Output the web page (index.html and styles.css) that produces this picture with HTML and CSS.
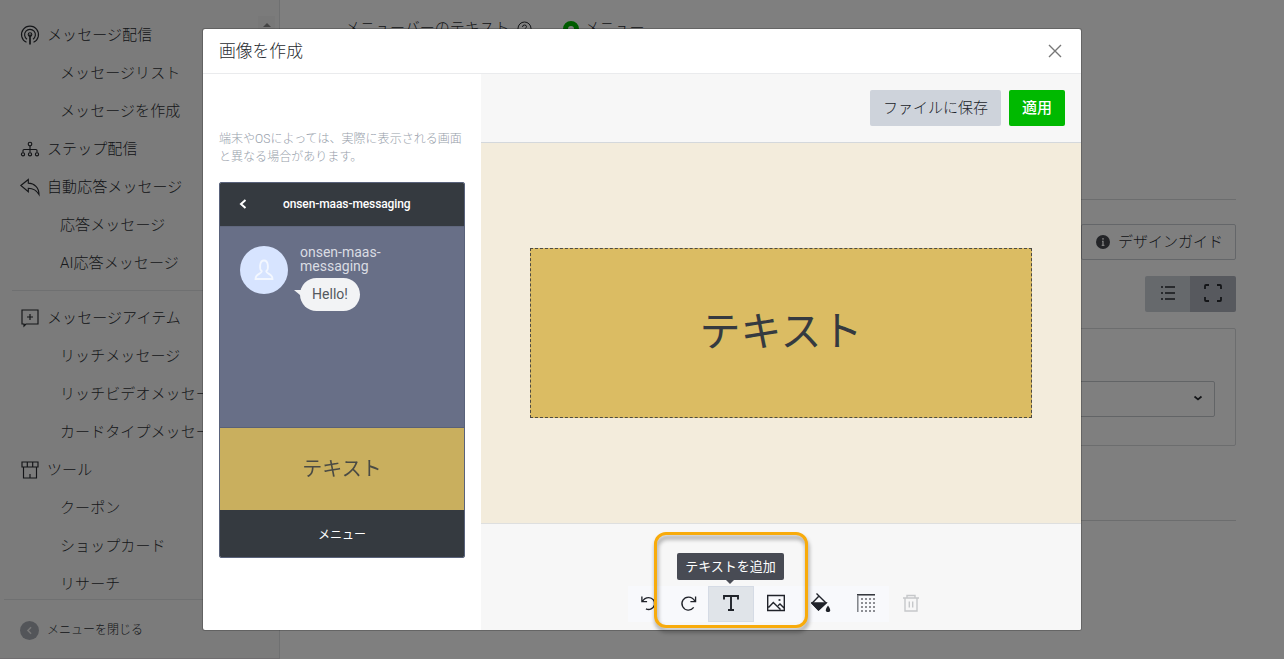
FILE: index.html
```html
<!DOCTYPE html>
<html lang="ja">
<head>
<meta charset="utf-8">
<title>画像を作成</title>
<link rel="stylesheet" href="styles.css">
</head>
<body>
<div class="app">
  <aside class="sidebar">
    <nav class="nav">
      <div class="nav-head"><svg class="ico" viewBox="0 0 20 20"><path d="M6.500 17.300a8.500 8.500 0 1 1 7 0"/><path d="M7 14.200a5.400 5.400 0 1 1 6 0"/><circle cx="10" cy="9.500" r="1.800"/><path d="M10 9.500v10" stroke-width="1.700"/></svg>メッセージ配信</div>
      <div class="nav-item">メッセージリスト</div>
      <div class="nav-item">メッセージを作成</div>
      <div class="nav-head"><svg class="ico" viewBox="0 0 20 20"><circle cx="10" cy="5" r="1.800"/><circle cx="3" cy="15.300" r="1.600"/><circle cx="10" cy="15.300" r="1.600"/><circle cx="17" cy="15.300" r="1.600"/><path d="M10 7v6.600M3 13.600V11.500q0-1 1-1h12q1 0 1 1v2.100"/></svg>ステップ配信</div>
      <div class="nav-head"><svg class="ico" viewBox="0 0 20 20"><path d="M.8 8.500 8.300 2.500v3.600C14.500 6.400 19 10.500 19 17.500 16.500 13 13 11.200 8.300 11.200v3.600Z"/></svg>自動応答メッセージ</div>
      <div class="nav-item">応答メッセージ</div>
      <div class="nav-item">AI応答メッセージ</div>
      <div class="nav-line"></div>
      <div class="nav-head"><svg class="ico" viewBox="0 0 20 20"><path d="M2 2h16v14H6l-2 2v-2H2ZM10 6v6M7 9h6"/></svg>メッセージアイテム</div>
      <div class="nav-item">リッチメッセージ</div>
      <div class="nav-item">リッチビデオメッセージ</div>
      <div class="nav-item">カードタイプメッセージ</div>
      <div class="nav-head"><svg class="ico" viewBox="0 0 20 20"><path d="M2 2h16v5H2ZM7.300 2v5M12.700 2v5M3.500 7v11h13V7M10 18v-4"/></svg>ツール</div>
      <div class="nav-item">クーポン</div>
      <div class="nav-item">ショップカード</div>
      <div class="nav-item">リサーチ</div>
    </nav>
    <div class="scroll-button"></div>
    <div class="collapse"><span class="collapse-dot"><svg viewBox="0 0 18 18"><path d="m10.500 6-3 3 3 3"/></svg></span>メニューを閉じる</div>
  </aside>
  <main class="main">
    <div class="bar-field"><span class="label">メニューバーのテキスト</span><svg class="help" viewBox="0 0 15 15"><circle cx="7.500" cy="7.500" r="6.500"/><path d="M5.500 6q0-2 2-2t2 1.700q0 1-1 1.500t-1 1.600M7.500 10v1.200"/></svg><span class="radio"></span><span class="label">メニュー</span></div>
    <div class="guide-row"><div class="guide"><svg viewBox="0 0 14 14"><circle cx="7" cy="7" r="7" fill="#46494f"/><path d="M7 3v1.800M6 6.300h1V10M5.700 10.300h2.700" stroke="#fff" stroke-width="1.300" fill="none"/></svg>デザインガイド</div></div>
    <div class="views"><span class="view"><svg viewBox="0 0 18 18"><path d="M2 3h2M6 3h10M2 9h2M6 9h10M2 15h2M6 15h10"/></svg></span><span class="view view-on"><svg viewBox="0 0 18 18"><path d="M1 5V2q0-1 1-1h3M13 1h3q1 0 1 1v3M1 13v3q0 1 1 1h3M13 17h3q1 0 1-1v-3" stroke-width="1.800"/></svg></span></div>
    <div class="panel"><div class="select"><svg viewBox="0 0 10 10"><path d="m1.500 3.500 3.500 3 3.500-3"/></svg></div></div>
    <div class="end-line"></div>
  </main>
</div>
<div class="backdrop">
  <section class="modal">
    <header class="modal-head"><span>画像を作成</span><svg class="close" viewBox="0 0 14 14"><path d="m1 1 12 12M13 1 1 13"/></svg></header>
    <div class="modal-body">
      <div class="preview">
        <p class="note">端末やOSによっては、実際に表示される画面<br>と異なる場合があります。</p>
        <div class="phone">
          <div class="phone-head"><svg viewBox="0 0 8 10"><path d="M6.500 1 2 5l4.500 4"/></svg><span>onsen-maas-messaging</span></div>
          <div class="chat">
            <div class="avatar"><svg viewBox="0 0 20 22"><path d="M7.800 12.300C5 10 5.500 1.500 10 1.500s5 8.500 2.200 10.800c0 2.700 6.300 2.200 6.300 7.700h-17c0-5.500 6.300-5 6.300-7.700Z"/></svg></div>
            <div class="talk"><div class="name">onsen-maas-<br>messaging</div><div class="bubble">Hello!</div></div>
          </div>
          <div class="thumb"><span>テキスト</span></div>
          <div class="phone-menu">メニュー</div>
        </div>
      </div>
      <div class="editor">
        <div class="actions"><button class="btn btn-save">ファイルに保存</button><button class="btn btn-apply">適用</button></div>
        <div class="canvas"><div class="artboard">テキスト</div></div>
        <div class="tools">
          <div class="tool-group">
            <span class="tool tool-undo"><svg viewBox="0 0 18 18"><path d="M2 1.500V7h5.500M2.500 7C4 4 6.500 2.700 9.300 2.700a6.300 6.300 0 1 1-3 11.900"/></svg></span>
            <span class="tool tool-redo"><svg viewBox="0 0 18 18"><path d="M16.500 1.500V7H11M16 7C14.500 4 12 2.200 9 2.200a6.900 6.900 0 1 0 5.500 11"/></svg></span>
            <span class="tool tool-on"><svg viewBox="0 0 18 18"><path d="M2 5.500V2h14v3.500M9 2v14M6 16h6" stroke-width="1.900"/></svg><span class="tip">テキストを追加</span></span>
            <span class="tool"><svg viewBox="0 0 18 18"><path d="M.7 1.500h16.600v15H.7ZM1.500 13.500l4.800-5 7.200 7M11 11.800l2-1.800 4 4"/><circle cx="12.500" cy="6" r=".4"/></svg></span>
            <span class="tool"><svg class="bucket" viewBox="0 0 20 20"><path d="m5.500.5 9.500 9.500-7.500 6.800L1 10.300l6.500-6.800"/><path d="M1 10h14l-7.500 7Z" fill="#20232a"/><path d="M17 12.500c-4 5.500-1.500 6.500 0 6.500s4-1 0-6.500Z" fill="#20232a" stroke="none"/></svg></span>
            <span class="tool"><svg viewBox="0 0 18 18"><path d="M0 .8h18"/><path d="M.8 1v17" stroke="#777b80"/><path d="M4 5h14M4 9h14M4 13h14M4 17h14" stroke-dasharray="2 2" stroke-width="1"/></svg></span>
          </div>
          <span class="tool tool-off"><svg viewBox="0 0 18 18"><path d="M1 4h16M5 4V1.500h8V4M3 4.500V17h12V4.500M7.300 7.500v6M10.700 7.500v6"/></svg></span>
        </div>
      </div>
    </div>
  </section>
  <div class="highlight"></div>
</div>
</body>
</html>
```
FILE: styles.css
```css
* { box-sizing: border-box; }
body { margin: 0; width: 1284px; height: 659px; overflow: hidden; position: relative; font: 300 15px/20px Roboto, "Noto Sans CJK JP", sans-serif; color: #282b30; background: #fff; }
svg { fill: none; stroke: currentColor; stroke-width: 1.4; display: block; flex: none; }

.app { display: flex; height: 659px; }
.sidebar { width: 280px; flex: none; background: #f7f7f7; border-right: 1px solid #dfe1e3; border-bottom: 1px solid #e0dde0; position: relative; display: flex; flex-direction: column; }
.nav { height: 599px; padding-top: 16px; overflow: hidden; }
.nav-head, .nav-item { height: 38px; display: flex; align-items: center; white-space: nowrap; letter-spacing: .08px; }
.nav-head { padding-left: 20px; gap: 7px; }
.nav-item { padding-left: 60px; color: #303338; }
.ico { width: 20px; height: 20px; margin-top: -1px; stroke-width: 1.150; }
.nav-line { height: 1px; margin: 8px 28px 8px 12px; background: #dfe1e3; }
.scroll-button { position: absolute; left: 258px; top: 16px; width: 17px; height: 17px; background: #f0f0f0; display: flex; justify-content: center; }
.scroll-button::before { content: ""; margin-top: 7px; height: 0; border: 4px solid transparent; border-top: 0; border-bottom-color: #888; }
.collapse { flex: 1; margin-left: 4px; padding: 2px 0 0 16px; border-top: 1px solid #dfe1e3; display: flex; align-items: center; gap: 8px; font-size: 12px; }
.collapse-dot { width: 19px; height: 19px; border-radius: 50%; background: #a7abb3; color: #eee; }

.main { flex: 1; padding: 18px 48px 0 65px; }
.bar-field { height: 182px; border-bottom: 1px solid #d8dadd; display: flex; align-items: flex-start; }
.help { width: 15px; height: 15px; margin: 3px 31px 0 8px; stroke-width: 1; }
.radio { width: 16px; height: 16px; margin: 3px 5px 0 0; border: 5px solid #00b900; border-radius: 50%; }
.guide-row { display: flex; justify-content: flex-end; padding-top: 24px; }
.guide { width: 155px; height: 36px; padding-left: 2px; border: 1px solid #c9cdd2; border-radius: 2px; display: flex; align-items: center; justify-content: center; gap: 8px; white-space: nowrap; }
.guide svg { width: 14px; height: 14px; stroke: none; }
.views { display: flex; justify-content: flex-end; margin-top: 16px; }
.view { width: 45px; height: 36px; background: #cdd2d8; border-radius: 2px 0 0 2px; display: grid; place-items: center; }
.view svg { width: 18px; height: 18px; margin-top: -3px; }
.view-on { width: 46px; background: #aeb3bd; border-radius: 0 2px 2px 0; }
.panel { height: 118px; margin-top: 16px; padding: 52px 20px 0; border: 1px solid #d8dadd; border-radius: 2px; }
.select { height: 36px; border: 1px solid #c4c8cd; border-radius: 2px; display: flex; align-items: center; justify-content: flex-end; padding-right: 11px; }
.select svg { width: 10px; height: 10px; margin-top: -2px; stroke-width: 1.700; }
.end-line { height: 1px; margin-top: 74px; background: #d8dadd; }

.backdrop { position: absolute; inset: 0; background: rgba(0, 0, 0, .5); }
.modal { position: absolute; left: 202px; top: 28px; width: 880px; height: 603px; background: #fff; background-clip: padding-box; border: 1px solid rgba(0, 0, 0, .2); border-radius: 3px; overflow: hidden; }
.modal-head { height: 45px; padding: 0 19px 0 16px; border-bottom: 1px solid #eaebed; display: flex; align-items: center; justify-content: space-between; font-size: 16.800px; }
.close { width: 14px; height: 14px; margin-top: -1px; color: #777; }
.modal-body { display: flex; height: 556px; }
.preview { width: 278px; padding: 56px 16px 0; }
.note { margin: 0 0 16px; font-size: 12px; line-height: 18px; letter-spacing: .04px; color: #969eaa; white-space: nowrap; }
.phone { width: 246px; height: 376px; border: 1px solid #59627b; border-radius: 2px; overflow: hidden; }
.phone-head { height: 43px; padding-bottom: 2px; background: #353a40; color: #fff; display: flex; align-items: center; font-size: 12px; font-weight: 500; letter-spacing: -.1px; }
.phone-head svg { width: 8px; height: 10px; margin: 0 36px 0 19px; stroke-width: 2; }
.chat { height: 202px; background: #686f87; border-top: 1px solid #60677d; border-bottom: 1px solid #596178; padding: 19px 20px; display: flex; gap: 12px; }
.avatar { width: 48px; height: 48px; border-radius: 50%; background: #d7e4ff; color: #f3f7ff; display: grid; place-items: center; }
.avatar svg { width: 20px; height: 22px; stroke-width: 1.800; }
.name { padding-top: 0; font-size: 14px; line-height: 14px; font-weight: 400; color: #dadce3; position: relative; top: -1px; }
.bubble { position: relative; width: 60px; height: 33px; margin-top: 4px; padding-bottom: 2px; border-radius: 17px; background: #f2f3f5; color: #54585e; font-size: 14px; font-weight: 400; display: grid; place-items: center; }
.bubble::before { content: ""; position: absolute; left: -6px; top: 12px; width: 12px; height: 10px; background: #f2f3f5; clip-path: polygon(0 0, 100% 0, 100% 100%); }
.thumb { height: 82px; background: #c9af5e; color: #353a40; display: grid; place-items: center; font-size: 20px; font-weight: 400; }
.thumb span { filter: blur(.5px); opacity: .85; margin-top: -1px; }
.phone-menu { height: 47px; padding-top: 2px; background: #353a40; color: #fff; display: grid; place-items: center; font-size: 12px; font-weight: 400; }

.editor { width: 600px; background: #f7f7f7; display: flex; flex-direction: column; }
.actions { height: 69px; padding: 16px 16px 0; border-bottom: 1px solid #d4d8dc; display: flex; justify-content: flex-end; gap: 8px; }
.btn { height: 36px; padding: 0; border: 0; border-radius: 2px; font: inherit; color: #202329; }
.btn-save { width: 131px; background: #ced3db; }
.btn-apply { width: 56px; background: #00b900; color: #fff; font-weight: 500; }
.canvas { height: 381px; background: #f3ecdc; border-bottom: 1px solid #dedfdf; display: grid; place-items: center; }
.artboard { width: 502px; height: 170px; background: #dbbc63; border: 1px dashed #4d4a42; display: grid; place-items: center; font-size: 41px; line-height: 60px; font-weight: 400; color: #353a40; padding-bottom: 2px; }
.tools { display: flex; padding: 62px 0 0 147px; color: #20232a; }
.tool-group { display: flex; background: #f8f9fc; }
.tool { position: relative; width: 45px; height: 36px; padding-right: 2px; display: grid; place-items: center; }
.tool svg { width: 18px; height: 18px; margin-top: -2px; }
.tool-undo, .tool-redo { width: 40px; padding: 0; }
.tool-undo svg, .tool-redo svg { width: 17px; height: 17px; }
.tool-on { width: 46px; padding: 0; background: #e0e4e9; border: 1px solid #d5dbe5; }
.tool .bucket { width: 20px; height: 20px; }
.tool-off { color: #c6c8ca; }
.tip { position: absolute; left: -32px; top: -34px; width: 107px; height: 27px; border-radius: 2px; background: #484b54; color: #fff; font-size: 13px; font-weight: 400; line-height: 27px; text-align: center; }
.tip::after { content: ""; position: absolute; left: 49px; top: 27px; border: 4px solid transparent; border-bottom: 0; border-top-color: #484b54; }
.highlight { position: absolute; left: 654px; top: 532px; width: 154px; height: 96px; border: 3px solid #f8ab0b; border-radius: 12px; filter: drop-shadow(1px 4px 2px rgba(0, 0, 0, .4)); }
```
